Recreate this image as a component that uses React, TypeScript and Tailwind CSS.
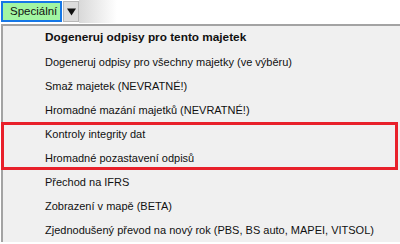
const items: { label: string; bold?: boolean }[] = [
  { label: 'Dogeneruj odpisy pro tento majetek', bold: true },
  { label: 'Dogeneruj odpisy pro všechny majetky (ve výběru)' },
  { label: 'Smaž majetek (NEVRATNÉ!)' },
  { label: 'Hromadné mazání majetků (NEVRATNÉ!)' },
  { label: 'Kontroly integrity dat' },
  { label: 'Hromadné pozastavení odpisů' },
  { label: 'Přechod na IFRS' },
  { label: 'Zobrazení v mapě (BETA)' },
  { label: 'Zjednodušený převod na nový rok (PBS, BS auto, MAPEI, VITSOL)' },
];

export default function App() {
  return (
    <div className="relative h-[244px] w-[400px] overflow-hidden bg-white font-['Liberation_Sans',Arial,sans-serif] text-[11px] text-[#111]">
      <div className="flex h-[23px] items-start bg-white">
        <div className="ml-[1px] mt-[1px] flex h-[21px] w-[61px] items-center border-2 border-[#1677e6] bg-[#a2f5a2] pl-[7px] text-[11.5px] text-[#111]">
          Speciální
        </div>
        <div className="ml-[1px] mt-[1px] flex h-[21px] w-[16px] items-center justify-center border border-[#b8b8b8] bg-[#dcdcdc]">
          <svg width="9" height="8" viewBox="0 0 9 8">
            <path d="M0 0.5 H9 L4.5 7.5 Z" fill="#111" />
          </svg>
        </div>
        <div className="h-[23px] w-[38px] bg-gradient-to-r from-[#d9d9d9] to-white" />
      </div>
      <div className="ml-[1px] mt-[1px] border-l-2 border-t-2 border-[#a3a3a3] bg-[#f0f0f0]">
        {items.map((item, index) => (
          <div
            key={index}
            className={`flex h-[24px] items-center whitespace-nowrap pl-[42px] ${item.bold ? 'text-[11.8px] font-bold' : ''}`}
          >
            {item.label}
          </div>
        ))}
      </div>
      <div className="absolute left-[1px] top-[122px] h-[48px] w-[397px] border-[3px] border-[#e8202a]" />
    </div>
  );
}
